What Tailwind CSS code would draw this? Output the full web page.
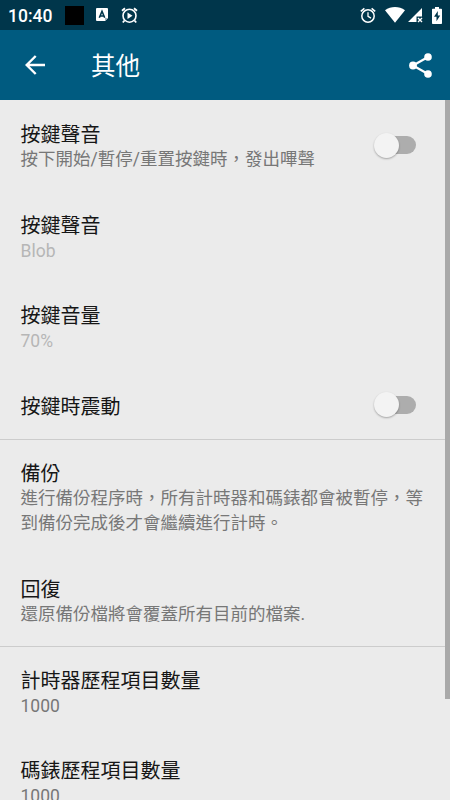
<!DOCTYPE html>
<html lang="zh-Hant">
<head>
<meta charset="utf-8">
<title>其他</title>
<script src="https://cdn.jsdelivr.net/npm/@tailwindcss/browser@4"></script>
</head>
<body class="w-[450px] h-[800px] overflow-hidden bg-[#ebebeb] font-[Roboto,'Noto_Sans_CJK_TC',sans-serif]">
<div class="relative flex flex-col w-[450px] h-[800px] overflow-hidden">
  <header class="shrink-0 text-white">
    <div class="h-[30px] bg-[#00364b] flex items-center pl-[8px] pr-[8px]">
      <span class="w-[57px] pt-[2px] text-[17.5px] leading-[28px] font-medium">10:40</span>
      <span class="w-[19px] h-[19px] bg-black"></span>
      <svg class="ml-[12px] w-[12px] h-[14px]" viewBox="0 0 12 14"><path fill="#fff" d="M1 0h10a1 1 0 0 1 1 1v9l-3 3H1a1 1 0 0 1-1-1V1a1 1 0 0 1 1-1z"/><path fill="#9fb0b8" d="M9 13v-3h3z"/><path fill="none" stroke="#00364b" stroke-width="1.6" d="M3.3 9.800L6 3.300 8.700 9.800M4.200 8h3.600"/></svg>
      <svg class="ml-[13px] w-[17px] h-[17px]" viewBox="0 0 17 17" fill="none" stroke="#fff"><circle cx="8.5" cy="8.700" r="6.500" stroke-width="1.600"/><path stroke-width="1.800" d="M1 3.800L4 1.200M16 3.800L13 1.200M3.500 13.500L1.800 15.500M13.500 13.500l1.700 2"/><path fill="#fff" stroke="none" d="M6.500 5.500v6.400l5-3.200z"/></svg>
      <span class="grow"></span>
      <svg class="w-[16px] h-[17px]" viewBox="0 0 16 17" fill="none" stroke="#fff"><circle cx="8" cy="9" r="6.200" stroke-width="1.500"/><path stroke-width="1.600" d="M.8 4.300L4.400 1.300M15.200 4.300L11.600 1.300"/><path stroke-width="1.300" d="M8 5.300v4l3 1.800"/></svg>
      <svg class="ml-[9px] w-[20px] h-[16px]" viewBox="0 0 20 16"><path fill="#fff" d="M0 3.300C6-1 14-1 20 3.300L10 15.700z"/></svg>
      <svg class="ml-[3px] w-[15px] h-[15px]" viewBox="0 0 15 15"><path fill="#fff" d="M14 0v8.500H8.500V14H0z"/><path stroke="#fff" stroke-width="1.400" d="M10 10l4 4M14 10l-4 4"/></svg>
      <svg class="ml-[9px] w-[10px] h-[17px]" viewBox="0 0 10 17"><path fill="#fff" d="M3 0h4v1.700h2.200q.8 0 .8.8v13.700q0 .8-.8.8H.8q-.8 0-.8-.8V2.500q0-.8.8-.8H3z"/><path fill="#00364b" d="M5.800 4L2 9.800h2.500v4.400L8.200 8.400H5.800z"/></svg>
    </div>
    <div class="h-[70px] bg-[#005b80] flex items-center pl-[25px] pr-[18px]">
      <svg class="w-[20px] h-[20px]" viewBox="0 0 20 20" fill="none" stroke="#fff" stroke-width="2.400"><path d="M20 10H2M10.700 1L1.700 10l9 9"/></svg>
      <h1 class="ml-[46px] pt-[4px] grow text-[24.500px] leading-[36px] font-normal">其他</h1>
      <svg class="w-[23px] h-[25px]" viewBox="0 0 23 25" fill="#fff"><path fill="none" stroke="#fff" stroke-width="2.200" d="M19 4L4 12.500 19 21"/><circle cx="19" cy="4" r="3.800"/><circle cx="4" cy="12.500" r="3.900"/><circle cx="19" cy="21" r="3.800"/></svg>
    </div>
  </header>
  <main class="flex flex-col pt-px text-[17.500px] leading-[25px] text-[#777777]">
    <section class="border-b border-[#cccccc]">
      <div class="h-[90.500px] pl-[20.500px] pr-[33px] pt-[20px] flex justify-between">
        <div><h2 class="pt-px text-[20px] leading-[26px] text-[#161616]">按鍵聲音</h2><p class="-mt-px">按下開始/暫停/重置按鍵時，發出嗶聲</p></div>
        <div class="mt-[11px] w-[43px] h-[26px] flex items-center"><span class="z-10 w-[25px] h-[25px] rounded-full bg-[#f3f3f3] shadow-[0_1px_2px_rgba(0,0,0,0.3)]"></span><span class="-ml-[15px] w-[32px] h-[18px] rounded-full bg-[#adadad]"></span></div>
      </div>
      <div class="h-[90.500px] pl-[20.500px] pt-[20px]"><h2 class="pt-px text-[20px] leading-[26px] text-[#161616]">按鍵聲音</h2><p class="text-[#b6b6b6]">Blob</p></div>
      <div class="h-[90.500px] pl-[20.500px] pt-[20px]"><h2 class="pt-px text-[20px] leading-[26px] text-[#161616]">按鍵音量</h2><p class="text-[#b6b6b6]">70%</p></div>
      <div class="h-[66.500px] pl-[20.500px] pr-[33px] pt-[19px] flex justify-between">
        <h2 class="pt-[2px] text-[20px] leading-[26px] text-[#161616]">按鍵時震動</h2>
        <div class="w-[43px] h-[26px] flex items-center"><span class="z-10 w-[25px] h-[25px] rounded-full bg-[#f3f3f3] shadow-[0_1px_2px_rgba(0,0,0,0.3)]"></span><span class="-ml-[15px] w-[32px] h-[18px] rounded-full bg-[#adadad]"></span></div>
      </div>
    </section>
    <section class="border-b border-[#cccccc]">
      <div class="h-[116px] pl-[20.500px] pt-[20px]"><h2 class="pt-px text-[20px] leading-[26px] text-[#161616]">備份</h2><p class="-mt-px whitespace-nowrap">進行備份程序時，所有計時器和碼錶都會被暫停，等<br>到備份完成後才會繼續進行計時。</p></div>
      <div class="h-[90px] pl-[20.500px] pt-[20px]"><h2 class="pt-px text-[20px] leading-[26px] text-[#161616]">回復</h2><p class="-mt-px">還原備份檔將會覆蓋所有目前的檔案.</p></div>
    </section>
    <section>
      <div class="h-[90.500px] pl-[20.500px] pt-[20px]"><h2 class="pt-px text-[20px] leading-[26px] text-[#161616]">計時器歷程項目數量</h2><p>1000</p></div>
      <div class="h-[90.500px] pl-[20.500px] pt-[20px]"><h2 class="text-[20px] leading-[26px] text-[#161616]">碼錶歷程項目數量</h2><p>1000</p></div>
    </section>
  </main>
  <div class="absolute right-0 top-[100px] w-[5px] h-[599px] bg-[#a9a9a9]"></div>
</div>
</body>
</html>
